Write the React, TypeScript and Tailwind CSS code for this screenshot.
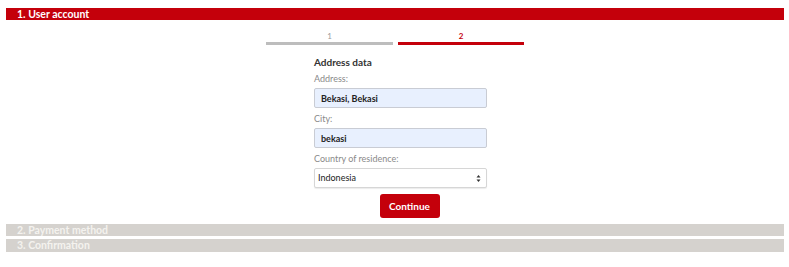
import { useState } from 'react'

const font = { fontFamily: 'Lato, "Open Sans", sans-serif' }

function Field({ label, value, top }: { label: string; value: string; top: string }) {
  return (
    <div className={top}>
      <div className="h-[12px] text-[9px] leading-[12px] text-[#8a8a8a]">{label}</div>
      <input
        readOnly
        value={value}
        className="mt-[3px] block h-[20px] w-full rounded-[2px] border border-[#c9ccd4] bg-[#e8f0fe] px-[6px] text-[9px] font-bold text-[#222] outline-none"
      />
    </div>
  )
}

export default function App() {
  const [country] = useState('Indonesia')

  return (
    <div className="h-[267px] w-[789px] bg-white px-[6px] pt-[8px]" style={font}>
      {/* 1. aktiver Abschnitt */}
      <div className="h-[12px] w-[778px] bg-[#c4000b] pl-[11px] text-[10.5px] font-bold leading-[12px] text-white">
        1. User account
      </div>

      {/* Schritte */}
      <div className="ml-[260px] mt-[11px] flex w-[258px] gap-[5px]">
        <div className="flex w-[127px] flex-col items-center">
          <span className="h-[10px] text-[8px] leading-[10px] text-[#9a9a9a]">1</span>
          <div className="mt-[1px] h-[3px] w-full bg-[#bdbdbd]" />
        </div>
        <div className="flex w-[126px] flex-col items-center">
          <span className="h-[10px] text-[8px] font-bold leading-[10px] text-[#c4000b]">2</span>
          <div className="mt-[1px] h-[3px] w-full bg-[#c4000b]" />
        </div>
      </div>

      {/* Formular */}
      <div className="ml-[308px] w-[173px]">
        <div className="mt-[10px] h-[14px] text-[10px] font-bold leading-[14px] text-[#333]">
          Address data
        </div>
        <Field top="mt-[4px]" label="Address:" value="Bekasi, Bekasi" />
        <Field top="mt-[5px]" label="City:" value="bekasi" />
        <div className="mt-[5px]">
          <div className="h-[12px] text-[9px] leading-[12px] text-[#8a8a8a]">Country of residence:</div>
          <div className="relative mt-[3px] flex h-[20px] w-full items-center rounded-[2px] border border-[#d6d6d6] bg-white pl-[3px] text-[9px] text-[#222] shadow-[0_1px_1px_rgba(0,0,0,0.08)]">
            {country}
            <svg className="absolute right-[5px] top-[5px]" width="5" height="9" viewBox="0 0 5 9">
              <path d="M0.5 3.5 L2.5 1 L4.5 3.5 Z" fill="#333" />
              <path d="M0.5 5.5 L2.5 8 L4.5 5.5 Z" fill="#333" />
            </svg>
          </div>
        </div>
        <div className="mt-[6px] flex justify-center pl-[18px]">
          <button className="h-[24px] w-[60px] rounded-[3px] bg-[#c4000b] text-[10px] font-bold text-white">
            Continue
          </button>
        </div>
      </div>

      {/* weitere Abschnitte */}
      <div className="mt-[6px] h-[12px] w-[778px] bg-[#d5d2ce] pl-[11px] text-[10.5px] font-bold leading-[12px] text-[#f4f2ef]">
        2. Payment method
      </div>
      <div className="mt-[3px] h-[13px] w-[778px] bg-[#d5d2ce] pl-[11px] text-[10.5px] font-bold leading-[13px] text-[#f4f2ef]">
        3. Confirmation
      </div>
    </div>
  )
}
